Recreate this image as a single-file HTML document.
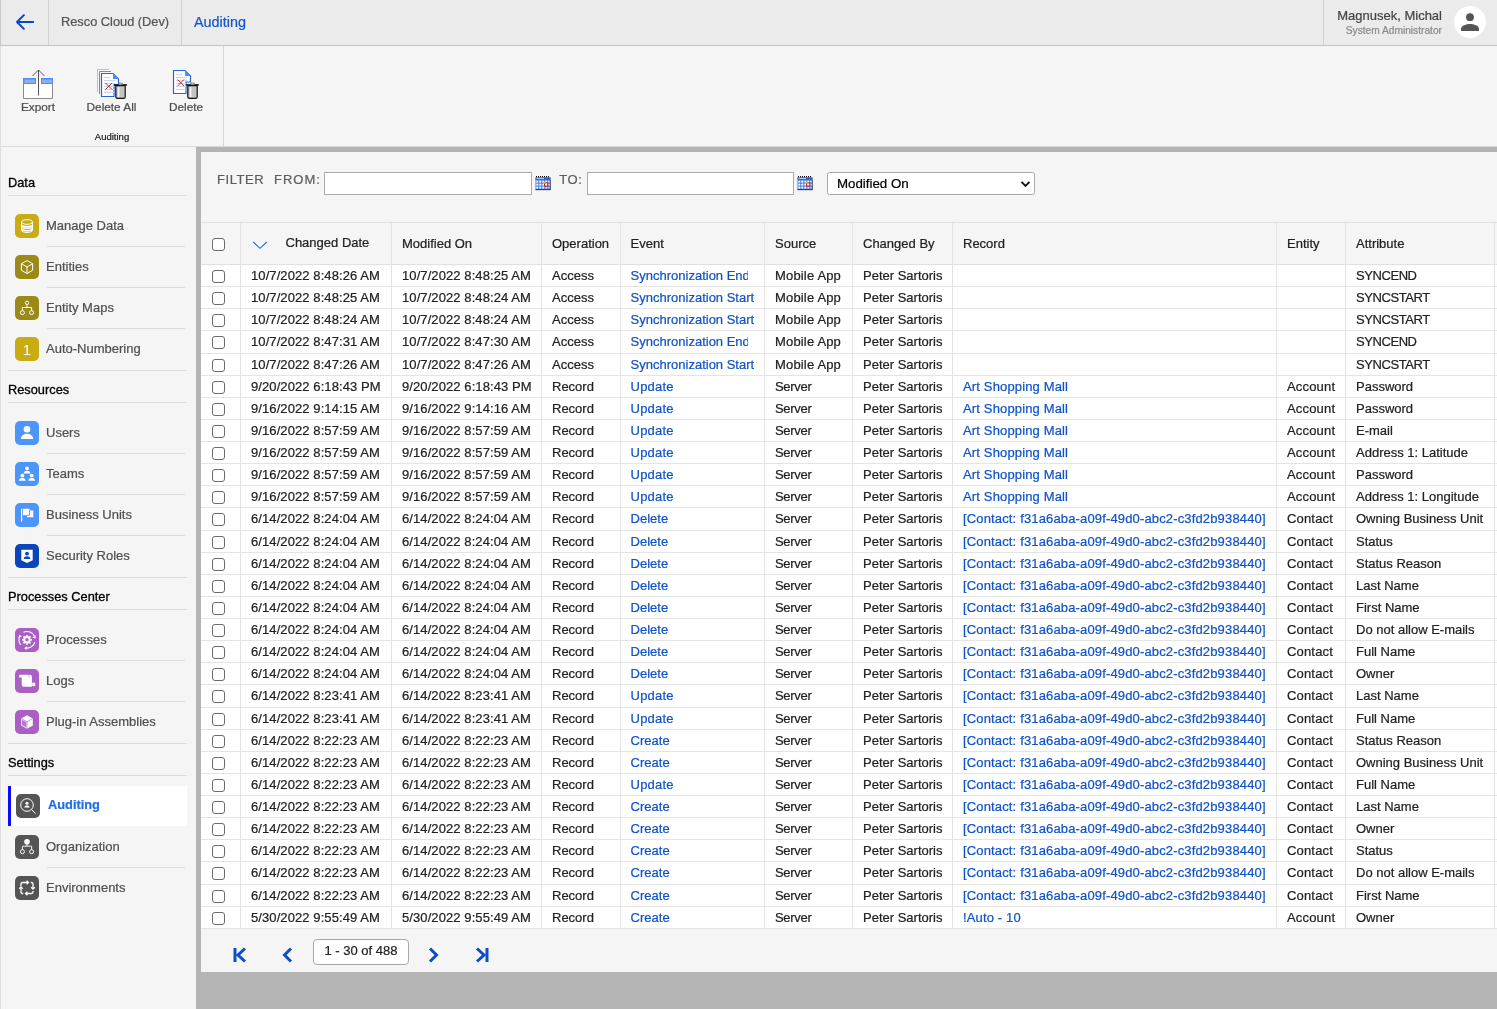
<!DOCTYPE html>
<html lang="en"><head><meta charset="utf-8"><title>Auditing</title>
<style>
*{box-sizing:border-box;margin:0;padding:0}
html,body{width:1497px;height:1009px;overflow:hidden;background:#f5f5f5;font-family:"Liberation Sans",Arial,sans-serif;color:#222}
body{position:relative}
.abs{position:absolute}
#hdr{position:absolute;left:0;top:0;width:1497px;height:46px;background:#ebebeb;border-bottom:1px solid #c4c4c4}
#hdr .sep{position:absolute;top:0;width:1px;height:45px;background:#d2d2d2}
#hdr .t{position:absolute;white-space:nowrap;line-height:1}
#tb{position:absolute;left:0;top:46px;width:1497px;height:101px;background:#f5f5f5;border-bottom:1px solid #dadada}
#tb .grp{position:absolute;left:0;top:0;width:224px;height:100px;border-right:1px solid #d8d8d8}
#tb .lbl{position:absolute;white-space:nowrap;line-height:1;color:#4c4c4c;font-size:11.8px;transform:translateX(-50%)}
#tb svg{position:absolute}
#side{position:absolute;left:0;top:147px;width:196px;height:862px;background:#f5f5f5}
#side .sh{position:absolute;left:8px;font-size:12.8px;-webkit-text-stroke:.3px;color:#000;line-height:1;white-space:nowrap}
#side .ln{position:absolute;left:8px;width:179px;height:1px;background:#dcdcdc}
#side .il{position:absolute;left:47px;width:138px;height:1px;background:#dcdcdc}
#side .ic{position:absolute;left:15px;width:24px;height:24px;border-radius:5px}
#side .ic svg{position:absolute;left:0;top:0}
#side .it{position:absolute;left:46px;font-size:13px;color:#505050;line-height:1;white-space:nowrap}
#side .sel{position:absolute;left:8px;width:179px;height:40px;background:#fff;border-left:3px solid #0a0aff}
#frame{position:absolute;left:196px;top:147px;width:1301px;height:862px;background:#b4b4b4}
#panel{position:absolute;left:201px;top:152px;width:1296px;height:820px;background:#f5f5f5;overflow:hidden}
#flt .t{position:absolute;font-size:13px;letter-spacing:1px;color:#5e5e5e;line-height:1;white-space:nowrap}
#flt .inp{position:absolute;height:23px;background:#fff;border:1px solid #ababab}
#flt .selbox{position:absolute;height:23px;background:#fff;border:1px solid #a9a9a9;border-radius:2.5px;font-size:13.3px;color:#000;line-height:21px;padding-left:9px}
#grid{position:absolute;left:0;top:70px;width:1296px;border-top:1px solid #e0e0e0}
.hr,.r{display:flex;width:1296px;white-space:nowrap}
.hr{height:42px;background:#f5f5f5;border-bottom:1px solid #e0e0e0;font-size:13px;color:#222}
.r{height:22.138px;background:#fff;border-bottom:1px solid #e4e4e4;font-size:13px;color:#222}
.c{flex:none;height:100%;border-right:1px solid #e4e4e4;padding-left:10px;overflow:hidden;position:relative;display:flex;align-items:center}
.r .c span,.r .c a{display:inline-block;line-height:21px;position:relative;top:0}
.c0{width:40px;padding-left:0}
.c1{width:151px}.c2{width:150px}.c3{width:79px}.c4{width:144px;padding-left:9.6px}.c5{width:88px}.c6{width:100px}.c7{width:324px}.c8{width:69px}.c9{width:149px}.c10{width:10px;border-right:0}
.c a{color:#1053c8}
.ev{overflow:hidden}
.evE{width:117.3px}.evS{width:123.3px}
.cb{position:absolute;left:11px;top:5.5px;width:13px;height:13px;border:1px solid #6b6b6b;border-radius:3px;background:#fff}
.hcb{top:15px}
.r .c .cb{position:absolute;top:5px;line-height:1}
.sort{position:absolute;left:11px;top:18px}
.h1{position:absolute;left:44.500px;top:13px;line-height:1}
#pg{position:absolute;left:0;top:776px;width:1296px;height:43px}
#pg svg{position:absolute}

#pg .box{position:absolute;left:112px;top:11px;width:96px;height:26px;border:1px solid #a8a8a8;border-radius:4px;background:#fff;font-size:13px;color:#222;text-align:center;line-height:22px}
.r .c1 span,.r .c2 span{letter-spacing:.09px}
.up{letter-spacing:.2px}.ma{letter-spacing:.17px}.sv{letter-spacing:-.3px}.sy{letter-spacing:-.43px}
.r .c7 a{letter-spacing:.15px}.r .c8 span{letter-spacing:.17px}
#edge{position:absolute;left:0;top:0;width:1px;height:1009px;background:linear-gradient(#c8c8c8 0,#c8c8c8 46px,#dedede 46px,#dedede 100%);z-index:5}
.one{font-family:"Liberation Sans",Arial,sans-serif;font-size:15px}
#hdr,#tb,#side,#panel{will-change:transform}
body{-webkit-text-stroke:.22px}

</style></head>
<body>
<div id="edge"></div>
<div id="hdr">
<svg class="abs" style="left:15px;top:13px" width="20" height="18" viewBox="0 0 20 18"><path d="M8.900 2.100 L2 9 L8.900 15.900 M2 9 H18.200" fill="none" stroke="#0a47c4" stroke-width="2" stroke-linecap="round" stroke-linejoin="round"/></svg>
<div class="sep" style="left:48px"></div>
<div class="t" id="t_resco" style="left:61px;top:16px;font-size:12.8px;color:#555">Resco Cloud (Dev)</div>
<div class="sep" style="left:181px"></div>
<div class="t" id="t_aud" style="left:194px;top:15px;font-size:14.4px;color:#1257cc">Auditing</div>
<div class="sep" style="left:1323px"></div>
<div class="t" id="t_name" style="right:55px;top:9px;font-size:13px;color:#444">Magnusek, Michal</div>
<div class="t" id="t_role" style="right:55px;top:25.5px;font-size:10.2px;color:#8a8a8a">System Administrator</div>
<div class="abs" style="left:1454px;top:6px;width:32px;height:32px;border-radius:50%;background:#fff"></div>
<svg class="abs" style="left:1454px;top:6px" width="32" height="32" viewBox="0 0 32 32"><circle cx="16" cy="11.2" r="3.9" fill="#555"/><path d="M7 25 v-2.2 c0-3.2 5.5-4.8 9-4.8 s9 1.600 9 4.800 V25 z" fill="#555"/></svg>
</div>
<div id="tb">
<div class="grp"></div>
<!-- Export -->
<svg style="left:22px;top:22px" width="33" height="32" viewBox="0 0 33 32">
<rect x="1.5" y="10.500" width="29" height="20" fill="#fff"/><path d="M1.500 10.500 V30.500 H30.500 V10.500" fill="none" stroke="#8a8a8a" stroke-width="1"/>
<rect x="1" y="10" width="13" height="6" fill="#4f8df0"/><rect x="19" y="10" width="12" height="6" fill="#4f8df0"/>
<rect x="2.500" y="11.500" width="10.500" height="3.500" fill="#86b1f5"/><rect x="20" y="11.500" width="10" height="3.500" fill="#86b1f5"/>
<path d="M16.500 27.500 V2 M10.500 8 L16.500 2 L22.500 8" fill="none" stroke="#555" stroke-width="1"/>
</svg>
<div class="lbl" id="l_exp" style="left:38px;top:56px">Export</div>
<!-- Delete All -->
<svg style="left:96px;top:22px" width="34" height="34" viewBox="0 0 34 34">
<path d="M1.5 24 V1.500 H13" fill="none" stroke="#a9c3f3" stroke-width="1"/>
<path d="M3.500 26 V3.500 H15" fill="none" stroke="#5d8fe8" stroke-width="1"/>
<path d="M5.500 5.500 H17 L22.500 11 V17 H18 V28.500 H5.500 Z" fill="#fff" stroke="#2866d8" stroke-width="1.2"/>
<path d="M17 5.500 V11 H22.500 Z" fill="#4f8df0"/>
<path d="M8 9.500 H14 M8 12.500 H19 M8 15.500 H19 M8 18.500 H18 M8 21.500 H18 M8 24.500 H18" stroke="#c5d6f7" stroke-width="1"/>
<path d="M9.500 15 L16 21.500 M16 15 L9.500 21.500" stroke="#b51510" stroke-width="0.900"/>
<path d="M19.800 17.600 V28.700 Q19.800 30.400 21.500 30.400 H27.500 Q29.200 30.400 29.200 28.700 V17.600 Z" fill="#c4c4c4" stroke="#111" stroke-width="1.200"/>
<path d="M22.600 19.300 V28.800" stroke="#f4f4f4" stroke-width="1.600"/>
<path d="M18 16.900 H31" stroke="#111" stroke-width="1.500"/>
<path d="M22.700 16.500 V15.200 H26.300 V16.500" fill="#fff" stroke="#555" stroke-width="0.800"/>
</svg>
<div class="lbl" id="l_dela" style="left:111.500px;top:56px">Delete All</div>
<!-- Delete -->
<svg style="left:169px;top:23px" width="34" height="34" viewBox="0 0 34 34">
<path d="M4.500 1.500 H16 L21.500 7 V13 H17 V24.500 H4.500 Z" fill="#fff" stroke="#2866d8" stroke-width="1.2"/>
<path d="M16 1.500 V7 H21.500 Z" fill="#4f8df0"/>
<path d="M7 5.500 H13 M7 8.500 H18 M7 11.500 H18 M7 14.500 H17 M7 17.500 H17 M7 20.500 H17" stroke="#c5d6f7" stroke-width="1"/>
<path d="M8.500 10.500 L15 17 M15 10.500 L8.500 17" stroke="#b51510" stroke-width="0.900"/>
<path d="M18.800 16.600 V27.700 Q18.800 29.400 20.500 29.400 H26.500 Q28.200 29.400 28.200 27.700 V16.600 Z" fill="#c4c4c4" stroke="#111" stroke-width="1.200"/>
<path d="M21.600 18.300 V27.800" stroke="#f4f4f4" stroke-width="1.600"/>
<path d="M17.200 15.900 H29.800" stroke="#111" stroke-width="1.500"/>
<path d="M21.700 15.500 V14.200 H25.300 V15.500" fill="#fff" stroke="#555" stroke-width="0.800"/>
</svg>
<div class="lbl" id="l_del" style="left:186px;top:56px">Delete</div>
<div class="lbl" id="l_grp" style="left:112px;top:86px;font-size:9.5px;color:#222">Auditing</div>
</div>
<div id="side">
<div class="sh" style="top:29.9px">Data</div><div class="ln" style="top:48px"></div>
<div class="ic" style="top:67px;background:#c9ab12"><svg width="24" height="24" viewBox="0 0 24 24"><ellipse cx="12" cy="8" rx="5.500" ry="2.300" stroke="#fff" fill="none" stroke-width="1"/><path d="M6.500 8 V16.200 C6.500 19.200 17.500 19.200 17.500 16.200 V8 M6.500 12 C6.500 14.800 17.500 14.800 17.500 12 M6.500 16 C6.500 13.400 17.500 13.400 17.500 16" stroke="#fff" fill="none" stroke-width="1"/><path d="M6.500 10.800 C6.500 13.400 17.500 13.400 17.500 10.800 M6.500 14.800 C6.500 17.400 17.500 17.400 17.500 14.800" stroke="#fff" fill="none" stroke-width="1.600"/></svg></div><div class="it" style="top:72px">Manage Data</div><div class="il" style="top:99px"></div>
<div class="ic" style="top:108px;background:#9b8a17"><svg width="24" height="24" viewBox="0 0 24 24"><path d="M12 5.500 L17.600 8.700 V15.300 L12 18.500 L6.400 15.300 V8.700 Z M6.400 8.700 L12 12 L17.600 8.700 M12 12 V18.500" stroke="#fff" fill="none" stroke-width="1" stroke-linejoin="round"/></svg></div><div class="it" style="top:113px">Entities</div><div class="il" style="top:140px"></div>
<div class="ic" style="top:149px;background:#9b8a17"><svg width="24" height="24" viewBox="0 0 24 24"><circle cx="12" cy="6.800" r="1.700" stroke="#fff" fill="none" stroke-width="1"/><circle cx="7.400" cy="16.600" r="2" stroke="#fff" fill="none" stroke-width="1"/><circle cx="16.600" cy="16.600" r="2" stroke="#fff" fill="none" stroke-width="1"/><path d="M12 8.500 V11.500 M7.400 14.600 V11.500 H16.600 V14.600" stroke="#fff" fill="none" stroke-width="1"/></svg></div><div class="it" style="top:154px">Entity Maps</div><div class="il" style="top:181px"></div>
<div class="ic" style="top:190px;background:#c9ab12"><svg width="24" height="24" viewBox="0 0 24 24"><text x="12" y="17.500" class="one" fill="#fff" text-anchor="middle">1</text></svg></div><div class="it" style="top:195px">Auto-Numbering</div>
<div class="ln" style="top:223px"></div>
<div class="sh" style="top:236.9px">Resources</div><div class="ln" style="top:255px"></div>
<div class="ic" style="top:274px;background:#4b95fd"><svg width="24" height="24" viewBox="0 0 24 24"><circle cx="12" cy="8.300" r="3.300" fill="#fff"/><path d="M5.800 18 C6.200 14.200 8.800 12.800 12 12.800 S17.800 14.200 18.200 18 Z" fill="#fff"/></svg></div><div class="it" style="top:279px">Users</div><div class="il" style="top:306px"></div>
<div class="ic" style="top:315px;background:#4b95fd"><svg width="24" height="24" viewBox="0 0 24 24"><g fill="#fff"><circle cx="12" cy="6.300" r="1.900"/><path d="M8.600 11.400 C8.900 9.300 10.300 8.700 12 8.700 S15.100 9.300 15.400 11.400 Z"/><circle cx="7.300" cy="13.600" r="1.900"/><path d="M3.900 18.700 C4.200 16.600 5.600 16 7.300 16 S10.400 16.600 10.700 18.700 Z"/><circle cx="16.700" cy="13.600" r="1.900"/><path d="M13.300 18.700 C13.600 16.600 15 16 16.700 16 S19.800 16.600 20.100 18.700 Z"/></g></svg></div><div class="it" style="top:320px">Teams</div><div class="il" style="top:347px"></div>
<div class="ic" style="top:356px;background:#4b95fd"><svg width="24" height="24" viewBox="0 0 24 24"><g fill="#fff"><rect x="6" y="5.500" width="1.200" height="13"/><path d="M8 5.800 H14.500 V7.500 H18.300 V14.200 H12 V12.300 H8 Z"/></g><path d="M14.500 7.500 V12.300 H12" fill="none" stroke="#4b95fd" stroke-width="0.900"/></svg></div><div class="it" style="top:361px">Business Units</div><div class="il" style="top:388px"></div>
<div class="ic" style="top:397px;background:#0b45b9"><svg width="24" height="24" viewBox="0 0 24 24"><path d="M6.300 5.800 H17.700 V16.200 L12 19 L6.300 16.200 Z" fill="#fff"/><circle cx="12" cy="9.700" r="1.900" fill="#0b45b9"/><path d="M8.600 15 C8.900 12.900 10.300 12.200 12 12.200 S15.100 12.900 15.400 15 Z" fill="#0b45b9"/></svg></div><div class="it" style="top:402px">Security Roles</div>
<div class="ln" style="top:430px"></div>
<div class="sh" style="top:443.9px">Processes Center</div><div class="ln" style="top:462px"></div>
<div class="ic" style="top:481px;background:#ab5ec4"><svg width="24" height="24" viewBox="0 0 24 24"><circle cx="12" cy="11.800" r="2.700" stroke="#fff" fill="none" stroke-width="2"/><path d="M12 6.900 V8.300 M12 15.300 V16.700 M7.100 11.800 H8.500 M15.500 11.800 H16.900 M8.500 8.300 L9.500 9.300 M14.500 14.300 L15.500 15.300 M8.500 15.300 L9.500 14.300 M14.500 9.300 L15.500 8.300" stroke="#fff" stroke-width="1.700" fill="none"/><path d="M6 17 A8.300 8.300 0 0 1 4.800 8 M8.500 4.300 A8.300 8.300 0 0 1 19.600 8.500 M19.900 14 A8.300 8.300 0 0 1 10.500 20" stroke="#fff" stroke-width="1.100" fill="none"/><path d="M3.200 9.400 L4.700 6.800 L7 8.600 Z M17.300 9.800 L20.700 10.500 L20.600 7.300 Z M12 18.300 L9.200 20.200 L11.800 22 Z" fill="#fff"/></svg></div><div class="it" style="top:486px">Processes</div><div class="il" style="top:513px"></div>
<div class="ic" style="top:522px;background:#ab5ec4"><svg width="24" height="24" viewBox="0 0 24 24"><path d="M4.100 6.700 Q4.100 5.700 5.100 5.700 H15 Q16.900 5.700 16.900 7.600 V17.800 H8.700 Q6.700 17.800 6.700 15.800 V8.400 H4.100 Z" fill="#fff"/><rect x="17.100" y="13.600" width="3.200" height="3.600" rx="1.300" fill="#fff"/><path d="M13.300 5.700 Q14.300 6.300 14.300 8.400" stroke="#ab5ec4" stroke-width="0.600" fill="none"/></svg></div><div class="it" style="top:527px">Logs</div><div class="il" style="top:554px"></div>
<div class="ic" style="top:563px;background:#ab5ec4"><svg width="24" height="24" viewBox="0 0 24 24"><path d="M12 5.300 L17.800 8.500 V15.400 L12 18.700 L6.200 15.400 V8.500 Z" fill="#fff"/><path d="M6.200 8.500 L12 11.800 L17.800 8.500 M12 11.800 V18.700" fill="none" stroke="#c78ad4" stroke-width="0.900"/><path d="M7 9.800 L11.300 12.300 V17.400 L7 14.900 Z" fill="#ab5ec4" opacity="0.850"/></svg></div><div class="it" style="top:568px">Plug-in Assemblies</div>
<div class="ln" style="top:596px"></div>
<div class="sh" style="top:609.9px">Settings</div><div class="ln" style="top:628px"></div>
<div class="sel" style="top:639px"></div><div class="ic" style="left:16px;top:647px;background:#555555"><svg width="24" height="24" viewBox="0 0 24 24"><circle cx="11" cy="11" r="6.300" stroke="#fff" fill="none" stroke-width="1"/><path d="M15.600 15.600 L19.500 19.500" stroke="#fff" fill="none" stroke-width="1"/><circle cx="11" cy="9.300" r="1.500" fill="#fff"/><path d="M8.200 13.600 C8.400 11.900 9.600 11.400 11 11.400 S13.600 11.900 13.800 13.600 Z" fill="#fff"/></svg></div><div class="it" style="left:48px;top:652px;color:#1f6fe5;font-weight:bold;font-size:12.8px">Auditing</div>

<div class="ic" style="top:688px;background:#555555"><svg width="24" height="24" viewBox="0 0 24 24"><circle cx="12" cy="6.800" r="2.800" fill="#fff"/><circle cx="7.400" cy="16.700" r="2" stroke="#fff" fill="none" stroke-width="1"/><circle cx="16.600" cy="16.700" r="2" stroke="#fff" fill="none" stroke-width="1"/><path d="M12 9 V11.200 M7.400 14.700 V11.200 H16.600 V14.700" stroke="#fff" fill="none" stroke-width="0.900"/></svg></div><div class="it" style="top:693px">Organization</div><div class="il" style="top:720px"></div>
<div class="ic" style="top:729px;background:#555555"><svg width="24" height="24" viewBox="0 0 24 24"><path d="M6 10 V8 Q6 6.500 7.500 6.500 H13.200 M15.800 6.500 H16.500 Q18 6.500 18 8 V12.800 M18 15 V16 Q18 17.500 16.500 17.500 H10.800 M8.200 17.500 H7.500 Q6 17.500 6 16 V11.200" stroke="#fff" fill="none" stroke-width="1.300"/><path d="M11.600 4.700 L13.400 6.500 L11.600 8.300 M16.200 11.200 L18 13 L19.800 11.200 M12.400 15.700 L10.600 17.500 L12.400 19.300 M4.200 12.800 L6 11 L7.800 12.800" stroke="#fff" fill="none" stroke-width="1.300"/></svg></div><div class="it" style="top:734px">Environments</div>
</div>
<div id="frame"></div>
<div id="panel">
<div id="flt">
<div class="t" id="f_filter" style="left:16px;top:21px;letter-spacing:.55px">FILTER</div>
<div class="t" id="f_from" style="left:73px;top:21px">FROM:</div>
<div class="inp" style="left:123px;top:20px;width:208px"></div>
<svg class="abs cal" style="left:334px;top:23.400px" width="16" height="16" viewBox="0 0 16 16"><rect x="0.500" y="2.500" width="15" height="12.500" fill="#3f7be0"/><rect x="0.500" y="2.500" width="15" height="2.200" fill="#2a62cc"/><path d="M1.500 3.600 H9" stroke="#dbe6fb" stroke-width="0.800"/><g fill="#fff"><rect x="1.300" y="5.600" width="2" height="2"/><rect x="4.300" y="5.600" width="2" height="2"/><rect x="7.300" y="5.600" width="2" height="2"/><rect x="10.300" y="5.600" width="2" height="2"/><rect x="13.300" y="5.600" width="1.700" height="2"/><rect x="1.300" y="8.600" width="2" height="2"/><rect x="4.300" y="8.600" width="2" height="2"/><rect x="7.300" y="8.600" width="2" height="2"/><rect x="13.300" y="8.600" width="1.700" height="2"/><rect x="1.300" y="11.600" width="2" height="2"/><rect x="4.300" y="11.600" width="2" height="2"/><rect x="7.300" y="11.600" width="2" height="2"/><rect x="10.300" y="11.600" width="2" height="2" fill="#cfe0fb"/><rect x="13.300" y="11.600" width="1.700" height="2" fill="#cfe0fb"/></g><rect x="9.600" y="7.900" width="3.200" height="3.200" fill="#fff" stroke="#cc1111" stroke-width="1"/><path d="M9.100 9 V7.400 H10.800" stroke="#e0c000" stroke-width="1" fill="none"/><path d="M0.500 14.700 H15.500 M15.200 5 V15" stroke="#333" stroke-width="0.900" fill="none"/><path d="M1 1.600 H15" stroke="#111" stroke-width="1.200" stroke-dasharray="1 1"/></svg>
<div class="t" id="f_to" style="left:358.300px;top:20.600px;letter-spacing:.6px">TO:</div>
<div class="inp" style="left:386px;top:20px;width:207px"></div>
<svg class="abs cal" style="left:596px;top:23.400px" width="16" height="16" viewBox="0 0 16 16"><rect x="0.500" y="2.500" width="15" height="12.500" fill="#3f7be0"/><rect x="0.500" y="2.500" width="15" height="2.200" fill="#2a62cc"/><path d="M1.500 3.600 H9" stroke="#dbe6fb" stroke-width="0.800"/><g fill="#fff"><rect x="1.300" y="5.600" width="2" height="2"/><rect x="4.300" y="5.600" width="2" height="2"/><rect x="7.300" y="5.600" width="2" height="2"/><rect x="10.300" y="5.600" width="2" height="2"/><rect x="13.300" y="5.600" width="1.700" height="2"/><rect x="1.300" y="8.600" width="2" height="2"/><rect x="4.300" y="8.600" width="2" height="2"/><rect x="7.300" y="8.600" width="2" height="2"/><rect x="13.300" y="8.600" width="1.700" height="2"/><rect x="1.300" y="11.600" width="2" height="2"/><rect x="4.300" y="11.600" width="2" height="2"/><rect x="7.300" y="11.600" width="2" height="2"/><rect x="10.300" y="11.600" width="2" height="2" fill="#cfe0fb"/><rect x="13.300" y="11.600" width="1.700" height="2" fill="#cfe0fb"/></g><rect x="9.600" y="7.900" width="3.200" height="3.200" fill="#fff" stroke="#cc1111" stroke-width="1"/><path d="M9.100 9 V7.400 H10.800" stroke="#e0c000" stroke-width="1" fill="none"/><path d="M0.500 14.700 H15.500 M15.200 5 V15" stroke="#333" stroke-width="0.900" fill="none"/><path d="M1 1.600 H15" stroke="#111" stroke-width="1.200" stroke-dasharray="1 1"/></svg>
<div class="selbox" id="f_sel" style="left:626px;top:20px;width:208px">Modified On<svg class="abs" style="right:3px;top:7px" width="11" height="8" viewBox="0 0 11 8"><path d="M1.500 1.800 L5.500 5.800 L9.500 1.800" fill="none" stroke="#111" stroke-width="1.900"/></svg></div>
</div>
<div id="grid">
<div class="hr"><div class="c c0"><span class="cb hcb"></span></div><div class="c c1"><svg class="sort" width="16" height="9" viewBox="0 0 16 9"><path d="M1.2 1 L8 7.3 L14.8 1" fill="none" stroke="#2a6ae0" stroke-width="1.1"/></svg><span class="h1">Changed Date</span></div><div class="c c2"><span>Modified On</span></div><div class="c c3"><span>Operation</span></div><div class="c c4"><span>Event</span></div><div class="c c5"><span>Source</span></div><div class="c c6"><span>Changed By</span></div><div class="c c7"><span>Record</span></div><div class="c c8"><span>Entity</span></div><div class="c c9"><span>Attribute</span></div><div class="c c10"><span></span></div></div>
<div class="r"><div class="c c0"><span class="cb"></span></div><div class="c c1"><span>10/7/2022 8:48:26 AM</span></div><div class="c c2"><span>10/7/2022 8:48:25 AM</span></div><div class="c c3"><span>Access</span></div><div class="c c4"><a class="ev evE">Synchronization End</a></div><div class="c c5"><span class="ma">Mobile App</span></div><div class="c c6"><span>Peter Sartoris</span></div><div class="c c7"></div><div class="c c8"><span></span></div><div class="c c9"><span class="sy">SYNCEND</span></div><div class="c c10"></div></div>
<div class="r"><div class="c c0"><span class="cb"></span></div><div class="c c1"><span>10/7/2022 8:48:25 AM</span></div><div class="c c2"><span>10/7/2022 8:48:24 AM</span></div><div class="c c3"><span>Access</span></div><div class="c c4"><a class="ev evS">Synchronization Start</a></div><div class="c c5"><span class="ma">Mobile App</span></div><div class="c c6"><span>Peter Sartoris</span></div><div class="c c7"></div><div class="c c8"><span></span></div><div class="c c9"><span class="sy">SYNCSTART</span></div><div class="c c10"></div></div>
<div class="r"><div class="c c0"><span class="cb"></span></div><div class="c c1"><span>10/7/2022 8:48:24 AM</span></div><div class="c c2"><span>10/7/2022 8:48:24 AM</span></div><div class="c c3"><span>Access</span></div><div class="c c4"><a class="ev evS">Synchronization Start</a></div><div class="c c5"><span class="ma">Mobile App</span></div><div class="c c6"><span>Peter Sartoris</span></div><div class="c c7"></div><div class="c c8"><span></span></div><div class="c c9"><span class="sy">SYNCSTART</span></div><div class="c c10"></div></div>
<div class="r"><div class="c c0"><span class="cb"></span></div><div class="c c1"><span>10/7/2022 8:47:31 AM</span></div><div class="c c2"><span>10/7/2022 8:47:30 AM</span></div><div class="c c3"><span>Access</span></div><div class="c c4"><a class="ev evE">Synchronization End</a></div><div class="c c5"><span class="ma">Mobile App</span></div><div class="c c6"><span>Peter Sartoris</span></div><div class="c c7"></div><div class="c c8"><span></span></div><div class="c c9"><span class="sy">SYNCEND</span></div><div class="c c10"></div></div>
<div class="r"><div class="c c0"><span class="cb"></span></div><div class="c c1"><span>10/7/2022 8:47:26 AM</span></div><div class="c c2"><span>10/7/2022 8:47:26 AM</span></div><div class="c c3"><span>Access</span></div><div class="c c4"><a class="ev evS">Synchronization Start</a></div><div class="c c5"><span class="ma">Mobile App</span></div><div class="c c6"><span>Peter Sartoris</span></div><div class="c c7"></div><div class="c c8"><span></span></div><div class="c c9"><span class="sy">SYNCSTART</span></div><div class="c c10"></div></div>
<div class="r"><div class="c c0"><span class="cb"></span></div><div class="c c1"><span>9/20/2022 6:18:43 PM</span></div><div class="c c2"><span>9/20/2022 6:18:43 PM</span></div><div class="c c3"><span>Record</span></div><div class="c c4"><a class="ev up">Update</a></div><div class="c c5"><span class="sv">Server</span></div><div class="c c6"><span>Peter Sartoris</span></div><div class="c c7"><a>Art Shopping Mall</a></div><div class="c c8"><span>Account</span></div><div class="c c9"><span>Password</span></div><div class="c c10"></div></div>
<div class="r"><div class="c c0"><span class="cb"></span></div><div class="c c1"><span>9/16/2022 9:14:15 AM</span></div><div class="c c2"><span>9/16/2022 9:14:16 AM</span></div><div class="c c3"><span>Record</span></div><div class="c c4"><a class="ev up">Update</a></div><div class="c c5"><span class="sv">Server</span></div><div class="c c6"><span>Peter Sartoris</span></div><div class="c c7"><a>Art Shopping Mall</a></div><div class="c c8"><span>Account</span></div><div class="c c9"><span>Password</span></div><div class="c c10"></div></div>
<div class="r"><div class="c c0"><span class="cb"></span></div><div class="c c1"><span>9/16/2022 8:57:59 AM</span></div><div class="c c2"><span>9/16/2022 8:57:59 AM</span></div><div class="c c3"><span>Record</span></div><div class="c c4"><a class="ev up">Update</a></div><div class="c c5"><span class="sv">Server</span></div><div class="c c6"><span>Peter Sartoris</span></div><div class="c c7"><a>Art Shopping Mall</a></div><div class="c c8"><span>Account</span></div><div class="c c9"><span>E-mail</span></div><div class="c c10"></div></div>
<div class="r"><div class="c c0"><span class="cb"></span></div><div class="c c1"><span>9/16/2022 8:57:59 AM</span></div><div class="c c2"><span>9/16/2022 8:57:59 AM</span></div><div class="c c3"><span>Record</span></div><div class="c c4"><a class="ev up">Update</a></div><div class="c c5"><span class="sv">Server</span></div><div class="c c6"><span>Peter Sartoris</span></div><div class="c c7"><a>Art Shopping Mall</a></div><div class="c c8"><span>Account</span></div><div class="c c9"><span>Address 1: Latitude</span></div><div class="c c10"></div></div>
<div class="r"><div class="c c0"><span class="cb"></span></div><div class="c c1"><span>9/16/2022 8:57:59 AM</span></div><div class="c c2"><span>9/16/2022 8:57:59 AM</span></div><div class="c c3"><span>Record</span></div><div class="c c4"><a class="ev up">Update</a></div><div class="c c5"><span class="sv">Server</span></div><div class="c c6"><span>Peter Sartoris</span></div><div class="c c7"><a>Art Shopping Mall</a></div><div class="c c8"><span>Account</span></div><div class="c c9"><span>Password</span></div><div class="c c10"></div></div>
<div class="r"><div class="c c0"><span class="cb"></span></div><div class="c c1"><span>9/16/2022 8:57:59 AM</span></div><div class="c c2"><span>9/16/2022 8:57:59 AM</span></div><div class="c c3"><span>Record</span></div><div class="c c4"><a class="ev up">Update</a></div><div class="c c5"><span class="sv">Server</span></div><div class="c c6"><span>Peter Sartoris</span></div><div class="c c7"><a>Art Shopping Mall</a></div><div class="c c8"><span>Account</span></div><div class="c c9"><span>Address 1: Longitude</span></div><div class="c c10"></div></div>
<div class="r"><div class="c c0"><span class="cb"></span></div><div class="c c1"><span>6/14/2022 8:24:04 AM</span></div><div class="c c2"><span>6/14/2022 8:24:04 AM</span></div><div class="c c3"><span>Record</span></div><div class="c c4"><a class="ev">Delete</a></div><div class="c c5"><span class="sv">Server</span></div><div class="c c6"><span>Peter Sartoris</span></div><div class="c c7"><a>[Contact: f31a6aba-a09f-49d0-abc2-c3fd2b938440]</a></div><div class="c c8"><span>Contact</span></div><div class="c c9"><span>Owning Business Unit</span></div><div class="c c10"></div></div>
<div class="r"><div class="c c0"><span class="cb"></span></div><div class="c c1"><span>6/14/2022 8:24:04 AM</span></div><div class="c c2"><span>6/14/2022 8:24:04 AM</span></div><div class="c c3"><span>Record</span></div><div class="c c4"><a class="ev">Delete</a></div><div class="c c5"><span class="sv">Server</span></div><div class="c c6"><span>Peter Sartoris</span></div><div class="c c7"><a>[Contact: f31a6aba-a09f-49d0-abc2-c3fd2b938440]</a></div><div class="c c8"><span>Contact</span></div><div class="c c9"><span>Status</span></div><div class="c c10"></div></div>
<div class="r"><div class="c c0"><span class="cb"></span></div><div class="c c1"><span>6/14/2022 8:24:04 AM</span></div><div class="c c2"><span>6/14/2022 8:24:04 AM</span></div><div class="c c3"><span>Record</span></div><div class="c c4"><a class="ev">Delete</a></div><div class="c c5"><span class="sv">Server</span></div><div class="c c6"><span>Peter Sartoris</span></div><div class="c c7"><a>[Contact: f31a6aba-a09f-49d0-abc2-c3fd2b938440]</a></div><div class="c c8"><span>Contact</span></div><div class="c c9"><span>Status Reason</span></div><div class="c c10"></div></div>
<div class="r"><div class="c c0"><span class="cb"></span></div><div class="c c1"><span>6/14/2022 8:24:04 AM</span></div><div class="c c2"><span>6/14/2022 8:24:04 AM</span></div><div class="c c3"><span>Record</span></div><div class="c c4"><a class="ev">Delete</a></div><div class="c c5"><span class="sv">Server</span></div><div class="c c6"><span>Peter Sartoris</span></div><div class="c c7"><a>[Contact: f31a6aba-a09f-49d0-abc2-c3fd2b938440]</a></div><div class="c c8"><span>Contact</span></div><div class="c c9"><span>Last Name</span></div><div class="c c10"></div></div>
<div class="r"><div class="c c0"><span class="cb"></span></div><div class="c c1"><span>6/14/2022 8:24:04 AM</span></div><div class="c c2"><span>6/14/2022 8:24:04 AM</span></div><div class="c c3"><span>Record</span></div><div class="c c4"><a class="ev">Delete</a></div><div class="c c5"><span class="sv">Server</span></div><div class="c c6"><span>Peter Sartoris</span></div><div class="c c7"><a>[Contact: f31a6aba-a09f-49d0-abc2-c3fd2b938440]</a></div><div class="c c8"><span>Contact</span></div><div class="c c9"><span>First Name</span></div><div class="c c10"></div></div>
<div class="r"><div class="c c0"><span class="cb"></span></div><div class="c c1"><span>6/14/2022 8:24:04 AM</span></div><div class="c c2"><span>6/14/2022 8:24:04 AM</span></div><div class="c c3"><span>Record</span></div><div class="c c4"><a class="ev">Delete</a></div><div class="c c5"><span class="sv">Server</span></div><div class="c c6"><span>Peter Sartoris</span></div><div class="c c7"><a>[Contact: f31a6aba-a09f-49d0-abc2-c3fd2b938440]</a></div><div class="c c8"><span>Contact</span></div><div class="c c9"><span>Do not allow E-mails</span></div><div class="c c10"></div></div>
<div class="r"><div class="c c0"><span class="cb"></span></div><div class="c c1"><span>6/14/2022 8:24:04 AM</span></div><div class="c c2"><span>6/14/2022 8:24:04 AM</span></div><div class="c c3"><span>Record</span></div><div class="c c4"><a class="ev">Delete</a></div><div class="c c5"><span class="sv">Server</span></div><div class="c c6"><span>Peter Sartoris</span></div><div class="c c7"><a>[Contact: f31a6aba-a09f-49d0-abc2-c3fd2b938440]</a></div><div class="c c8"><span>Contact</span></div><div class="c c9"><span>Full Name</span></div><div class="c c10"></div></div>
<div class="r"><div class="c c0"><span class="cb"></span></div><div class="c c1"><span>6/14/2022 8:24:04 AM</span></div><div class="c c2"><span>6/14/2022 8:24:04 AM</span></div><div class="c c3"><span>Record</span></div><div class="c c4"><a class="ev">Delete</a></div><div class="c c5"><span class="sv">Server</span></div><div class="c c6"><span>Peter Sartoris</span></div><div class="c c7"><a>[Contact: f31a6aba-a09f-49d0-abc2-c3fd2b938440]</a></div><div class="c c8"><span>Contact</span></div><div class="c c9"><span>Owner</span></div><div class="c c10"></div></div>
<div class="r"><div class="c c0"><span class="cb"></span></div><div class="c c1"><span>6/14/2022 8:23:41 AM</span></div><div class="c c2"><span>6/14/2022 8:23:41 AM</span></div><div class="c c3"><span>Record</span></div><div class="c c4"><a class="ev up">Update</a></div><div class="c c5"><span class="sv">Server</span></div><div class="c c6"><span>Peter Sartoris</span></div><div class="c c7"><a>[Contact: f31a6aba-a09f-49d0-abc2-c3fd2b938440]</a></div><div class="c c8"><span>Contact</span></div><div class="c c9"><span>Last Name</span></div><div class="c c10"></div></div>
<div class="r"><div class="c c0"><span class="cb"></span></div><div class="c c1"><span>6/14/2022 8:23:41 AM</span></div><div class="c c2"><span>6/14/2022 8:23:41 AM</span></div><div class="c c3"><span>Record</span></div><div class="c c4"><a class="ev up">Update</a></div><div class="c c5"><span class="sv">Server</span></div><div class="c c6"><span>Peter Sartoris</span></div><div class="c c7"><a>[Contact: f31a6aba-a09f-49d0-abc2-c3fd2b938440]</a></div><div class="c c8"><span>Contact</span></div><div class="c c9"><span>Full Name</span></div><div class="c c10"></div></div>
<div class="r"><div class="c c0"><span class="cb"></span></div><div class="c c1"><span>6/14/2022 8:22:23 AM</span></div><div class="c c2"><span>6/14/2022 8:22:23 AM</span></div><div class="c c3"><span>Record</span></div><div class="c c4"><a class="ev">Create</a></div><div class="c c5"><span class="sv">Server</span></div><div class="c c6"><span>Peter Sartoris</span></div><div class="c c7"><a>[Contact: f31a6aba-a09f-49d0-abc2-c3fd2b938440]</a></div><div class="c c8"><span>Contact</span></div><div class="c c9"><span>Status Reason</span></div><div class="c c10"></div></div>
<div class="r"><div class="c c0"><span class="cb"></span></div><div class="c c1"><span>6/14/2022 8:22:23 AM</span></div><div class="c c2"><span>6/14/2022 8:22:23 AM</span></div><div class="c c3"><span>Record</span></div><div class="c c4"><a class="ev">Create</a></div><div class="c c5"><span class="sv">Server</span></div><div class="c c6"><span>Peter Sartoris</span></div><div class="c c7"><a>[Contact: f31a6aba-a09f-49d0-abc2-c3fd2b938440]</a></div><div class="c c8"><span>Contact</span></div><div class="c c9"><span>Owning Business Unit</span></div><div class="c c10"></div></div>
<div class="r"><div class="c c0"><span class="cb"></span></div><div class="c c1"><span>6/14/2022 8:22:23 AM</span></div><div class="c c2"><span>6/14/2022 8:22:23 AM</span></div><div class="c c3"><span>Record</span></div><div class="c c4"><a class="ev up">Update</a></div><div class="c c5"><span class="sv">Server</span></div><div class="c c6"><span>Peter Sartoris</span></div><div class="c c7"><a>[Contact: f31a6aba-a09f-49d0-abc2-c3fd2b938440]</a></div><div class="c c8"><span>Contact</span></div><div class="c c9"><span>Full Name</span></div><div class="c c10"></div></div>
<div class="r"><div class="c c0"><span class="cb"></span></div><div class="c c1"><span>6/14/2022 8:22:23 AM</span></div><div class="c c2"><span>6/14/2022 8:22:23 AM</span></div><div class="c c3"><span>Record</span></div><div class="c c4"><a class="ev">Create</a></div><div class="c c5"><span class="sv">Server</span></div><div class="c c6"><span>Peter Sartoris</span></div><div class="c c7"><a>[Contact: f31a6aba-a09f-49d0-abc2-c3fd2b938440]</a></div><div class="c c8"><span>Contact</span></div><div class="c c9"><span>Last Name</span></div><div class="c c10"></div></div>
<div class="r"><div class="c c0"><span class="cb"></span></div><div class="c c1"><span>6/14/2022 8:22:23 AM</span></div><div class="c c2"><span>6/14/2022 8:22:23 AM</span></div><div class="c c3"><span>Record</span></div><div class="c c4"><a class="ev">Create</a></div><div class="c c5"><span class="sv">Server</span></div><div class="c c6"><span>Peter Sartoris</span></div><div class="c c7"><a>[Contact: f31a6aba-a09f-49d0-abc2-c3fd2b938440]</a></div><div class="c c8"><span>Contact</span></div><div class="c c9"><span>Owner</span></div><div class="c c10"></div></div>
<div class="r"><div class="c c0"><span class="cb"></span></div><div class="c c1"><span>6/14/2022 8:22:23 AM</span></div><div class="c c2"><span>6/14/2022 8:22:23 AM</span></div><div class="c c3"><span>Record</span></div><div class="c c4"><a class="ev">Create</a></div><div class="c c5"><span class="sv">Server</span></div><div class="c c6"><span>Peter Sartoris</span></div><div class="c c7"><a>[Contact: f31a6aba-a09f-49d0-abc2-c3fd2b938440]</a></div><div class="c c8"><span>Contact</span></div><div class="c c9"><span>Status</span></div><div class="c c10"></div></div>
<div class="r"><div class="c c0"><span class="cb"></span></div><div class="c c1"><span>6/14/2022 8:22:23 AM</span></div><div class="c c2"><span>6/14/2022 8:22:23 AM</span></div><div class="c c3"><span>Record</span></div><div class="c c4"><a class="ev">Create</a></div><div class="c c5"><span class="sv">Server</span></div><div class="c c6"><span>Peter Sartoris</span></div><div class="c c7"><a>[Contact: f31a6aba-a09f-49d0-abc2-c3fd2b938440]</a></div><div class="c c8"><span>Contact</span></div><div class="c c9"><span>Do not allow E-mails</span></div><div class="c c10"></div></div>
<div class="r"><div class="c c0"><span class="cb"></span></div><div class="c c1"><span>6/14/2022 8:22:23 AM</span></div><div class="c c2"><span>6/14/2022 8:22:23 AM</span></div><div class="c c3"><span>Record</span></div><div class="c c4"><a class="ev">Create</a></div><div class="c c5"><span class="sv">Server</span></div><div class="c c6"><span>Peter Sartoris</span></div><div class="c c7"><a>[Contact: f31a6aba-a09f-49d0-abc2-c3fd2b938440]</a></div><div class="c c8"><span>Contact</span></div><div class="c c9"><span>First Name</span></div><div class="c c10"></div></div>
<div class="r"><div class="c c0"><span class="cb"></span></div><div class="c c1"><span>5/30/2022 9:55:49 AM</span></div><div class="c c2"><span>5/30/2022 9:55:49 AM</span></div><div class="c c3"><span>Record</span></div><div class="c c4"><a class="ev">Create</a></div><div class="c c5"><span class="sv">Server</span></div><div class="c c6"><span>Peter Sartoris</span></div><div class="c c7"><a>!Auto - 10</a></div><div class="c c8"><span>Account</span></div><div class="c c9"><span>Owner</span></div><div class="c c10"></div></div>
</div>
<div id="pg">
<svg style="left:32px;top:19px" width="14" height="16" viewBox="0 0 14 16"><path d="M2 1 V15" stroke="#0d4ec5" stroke-width="3" fill="none"/><path d="M12 1.500 L5 8 L12 14.500" stroke="#0d4ec5" stroke-width="3" fill="none"/></svg>
<svg style="left:80px;top:19px" width="12" height="16" viewBox="0 0 12 16"><path d="M10 1.500 L3.500 8 L10 14.500" stroke="#0d4ec5" stroke-width="3" fill="none"/></svg>
<div class="box" id="p_box">1 - 30 of 488</div>
<svg style="left:227px;top:19px" width="12" height="16" viewBox="0 0 12 16"><path d="M2 1.500 L8.500 8 L2 14.500" stroke="#0d4ec5" stroke-width="3" fill="none"/></svg>
<svg style="left:274px;top:19px" width="14" height="16" viewBox="0 0 14 16"><path d="M12 1 V15" stroke="#0d4ec5" stroke-width="3" fill="none"/><path d="M2 1.500 L9 8 L2 14.500" stroke="#0d4ec5" stroke-width="3" fill="none"/></svg>
</div>
</div>
</body></html>
